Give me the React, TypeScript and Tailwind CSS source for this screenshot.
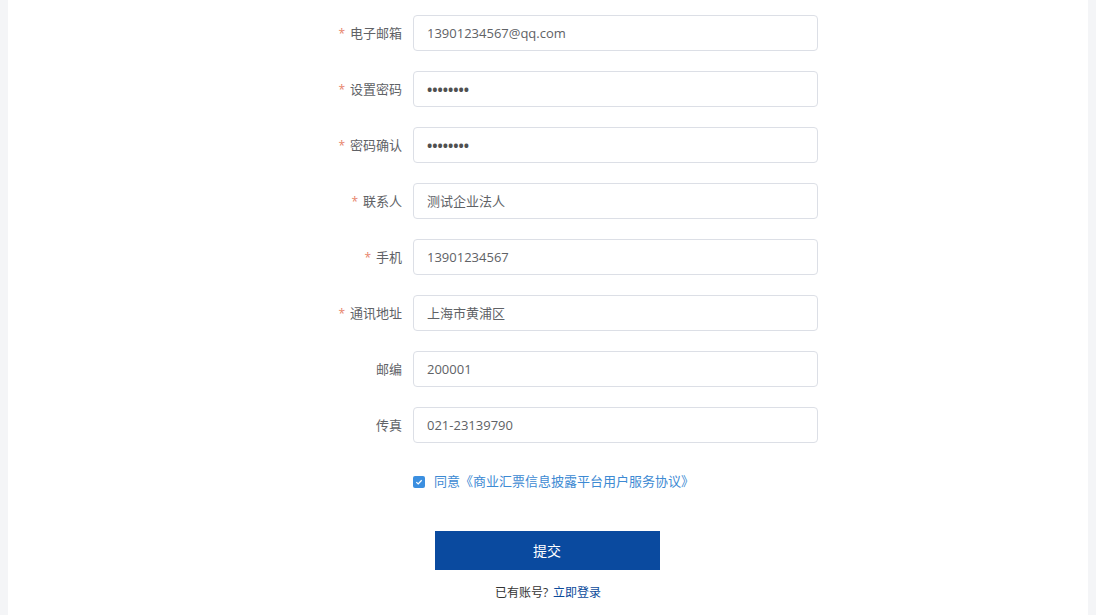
import React from "react";

const rows: { label: string; value: string; req: boolean; pwd?: boolean }[] = [
  { label: "电子邮箱", value: "13901234567@qq.com", req: true },
  { label: "设置密码", value: "12345678", req: true, pwd: true },
  { label: "密码确认", value: "12345678", req: true, pwd: true },
  { label: "联系人", value: "测试企业法人", req: true },
  { label: "手机", value: "13901234567", req: true },
  { label: "通讯地址", value: "上海市黄浦区", req: true },
  { label: "邮编", value: "200001", req: false },
  { label: "传真", value: "021-23139790", req: false },
];

export default function App() {
  return (
    <div
      className="w-[1096px] h-[615px] bg-[#f4f5f7] overflow-hidden"
      style={{ fontFamily: '"Open Sans", "Noto Sans CJK SC", sans-serif' }}
    >
      <div className="ml-[8px] w-[1080px] h-full bg-white pt-[15px]">
        <div className="flex flex-col gap-[20px]">
          {rows.map((r) => (
            <div key={r.label} className="flex items-center h-[36px]">
              <div className="ml-[294px] w-[100px] flex items-center justify-end text-[13px] text-[#606266] pt-[1px]">
                {r.req && <span className="text-[#e7836a] text-[12px] mr-[5px]">*</span>}
                {r.label}
              </div>
              <div className="ml-[11px] w-[405px] h-[36px] border border-[#dcdfe6] rounded-[4px] flex items-center px-[13px] pt-[1px] text-[13px] text-[#606266]">
                {r.pwd ? (
                  <span className="tracking-[0px] text-[#505050] text-[14px] font-bold">••••••••</span>
                ) : (
                  r.value
                )}
              </div>
            </div>
          ))}
        </div>
        <div className="flex items-center mt-[32px] ml-[405px] h-[14px]">
          <span className="w-[12px] h-[12px] rounded-[2px] bg-[#3b8fe0] flex items-center justify-center">
            <svg width="8" height="8" viewBox="0 0 8 8">
              <path d="M1.3 4.1 L3.2 5.9 L6.7 2.2" stroke="white" strokeWidth="1.3" fill="none" />
            </svg>
          </span>
          <span className="ml-[9px] text-[13px] text-[#3d8ad3]">同意《商业汇票信息披露平台用户服务协议》</span>
        </div>
        <div className="flex justify-center mt-[42px]">
          <button className="w-[225px] h-[39px] bg-[#0a4a9f] text-white text-[14px] -translate-x-[1px]">提交</button>
        </div>
        <div className="flex justify-center mt-[14px] text-[12px] text-[#333]">
          已有账号?<span className="ml-[5px] text-[#0b4a9b]">立即登录</span>
        </div>
      </div>
    </div>
  );
}
